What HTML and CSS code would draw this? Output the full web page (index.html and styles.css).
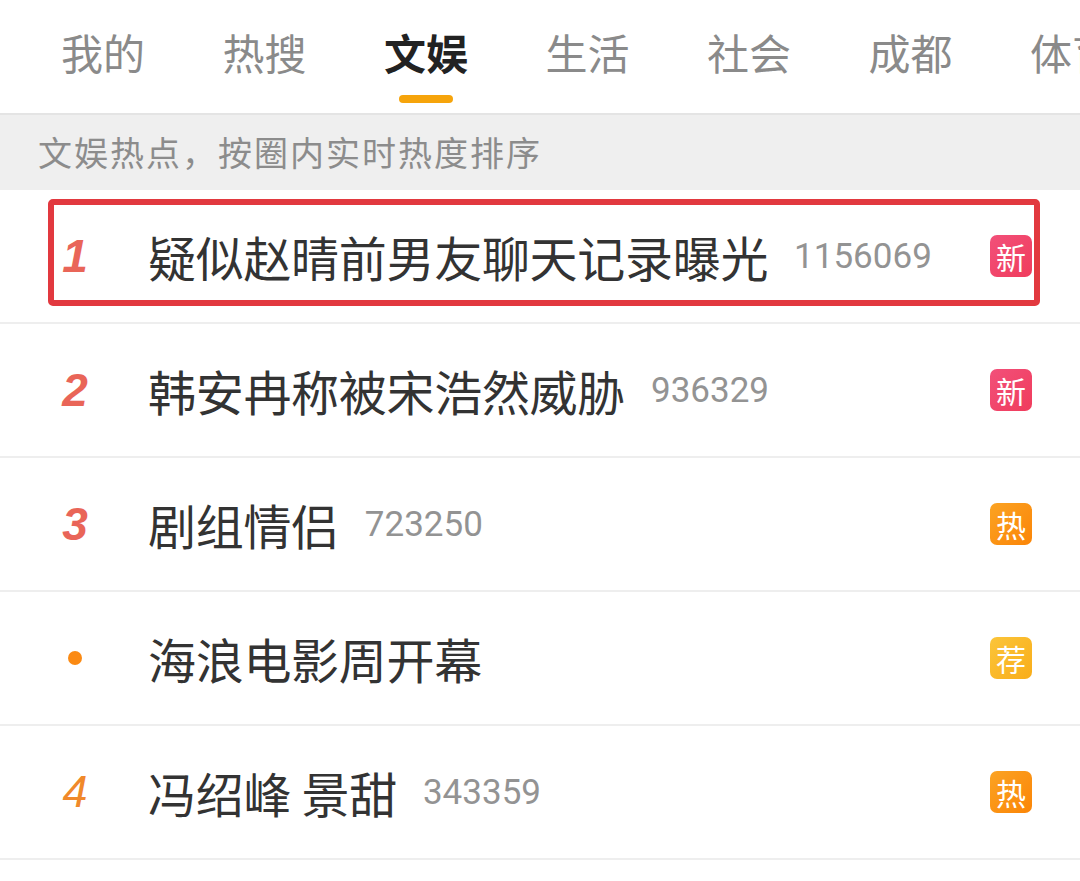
FILE: index.html
```html
<html>

<head>
    <meta name="viewport" content="width=device-width, initial-scale=1.0">
    <link rel="stylesheet" href="styles.css">
</head>

<body>
    <div class="tabs">
        <span class="tab">我的</span>
        <span class="tab">热搜</span>
        <span class="tab active">文娱</span>
        <span class="tab">生活</span>
        <span class="tab">社会</span>
        <span class="tab">成都</span>
        <span class="tab">体育</span>
    </div>

    <div class="hint">文娱热点，按圈内实时热度排序</div>

    <div class="list">
        <div class="row marked">
            <span class="rank top">1</span>
            <span class="title">疑似赵晴前男友聊天记录曝光</span>
            <span class="count">1156069</span>
            <span class="badge new">新</span>
        </div>
        <div class="row">
            <span class="rank top">2</span>
            <span class="title">韩安冉称被宋浩然威胁</span>
            <span class="count">936329</span>
            <span class="badge new">新</span>
        </div>
        <div class="row">
            <span class="rank top">3</span>
            <span class="title">剧组情侣</span>
            <span class="count">723250</span>
            <span class="badge hot">热</span>
        </div>
        <div class="row">
            <span class="rank"><i class="dot"></i></span>
            <span class="title">海浪电影周开幕</span>
            <span class="badge rec">荐</span>
        </div>
        <div class="row">
            <span class="rank">4</span>
            <span class="title">冯绍峰 景甜</span>
            <span class="count">343359</span>
            <span class="badge hot">热</span>
        </div>
    </div>
</body>

</html>
```

FILE: styles.css
```css
body {
    margin: 0;
    background: #ffffff;
    font-family: "Noto Sans CJK SC", "Noto Sans", sans-serif;
    overflow: hidden;
}

.tabs {
    display: flex;
    gap: 77.5px;
    height: 113px;
    box-sizing: border-box;
    padding: 22px 0 0 61px;
    white-space: nowrap;
    overflow: hidden;
}

.tab {
    display: flex;
    flex-direction: column;
    align-items: center;
    flex-shrink: 0;
    font-size: 42px;
    line-height: 60px;
    color: #8a8a8a;
}

.tab.active {
    color: #222222;
    font-weight: 700;
}

.tab.active::after {
    content: "";
    width: 54px;
    height: 8px;
    margin-top: 13px;
    border-radius: 4px;
    background: #f6a40b;
}

.hint {
    height: 77px;
    box-sizing: border-box;
    border-top: 2px solid #e4e4e4;
    background: #efefef;
    padding-left: 38px;
    font-size: 34px;
    line-height: 74px;
    letter-spacing: 2px;
    color: #8c8c8c;
}

.row {
    position: relative;
    display: flex;
    align-items: center;
    height: 132px;
    border-bottom: 2px solid #eeeeee;
}

.row.marked::before {
    content: "";
    position: absolute;
    left: 48px;
    top: 9px;
    width: 992px;
    height: 107px;
    box-sizing: border-box;
    border: 6px solid #e2393f;
    border-radius: 5px;
}

.rank {
    width: 148px;
    padding-left: 2px;
    box-sizing: border-box;
    display: flex;
    justify-content: center;
    font-family: "Liberation Sans", Arial, sans-serif;
    font-style: italic;
    font-size: 45px;
    color: #f0892a;
}

.rank.top {
    font-weight: 700;
    font-size: 46px;
    color: #e96558;
}

.dot {
    width: 14px;
    height: 14px;
    border-radius: 50%;
    background: #fb8a13;
}

.title {
    font-size: 48px;
    letter-spacing: -0.3px;
    color: #333333;
    white-space: nowrap;
}

.count {
    margin-left: 26px;
    font-family: Roboto, "Noto Sans", sans-serif;
    font-size: 35px;
    color: #939393;
}

.badge {
    margin-left: auto;
    margin-right: 48px;
    width: 42px;
    height: 42px;
    border-radius: 7px;
    display: flex;
    justify-content: center;
    align-items: center;
    font-size: 30px;
    color: #ffffff;
}

.new {
    background: linear-gradient(135deg, #f2507a, #f03c5c);
}

.hot {
    background: linear-gradient(135deg, #fba323, #fb8507);
}

.rec {
    background: linear-gradient(135deg, #fbc53a, #f9ad1a);
}
```
